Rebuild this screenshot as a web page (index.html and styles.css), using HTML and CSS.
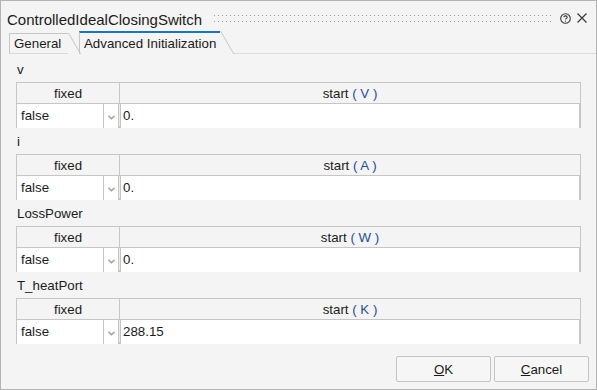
FILE: index.html
```html
<!DOCTYPE html>
<html>

<head>
    <meta charset="utf-8">
    <title>ControlledIdealClosingSwitch</title>

    <link rel="stylesheet" href="styles.css">
</head>

<body>

    <div class="dialog">
        <div class="titlebar">
            <span class="title">ControlledIdealClosingSwitch</span>
            <span class="grip"></span>
            <svg class="help_icon" width="11" height="11" viewBox="0 0 11 11">
                <circle cx="5.5" cy="5.5" r="4.8" fill="none" stroke="#3a3a3a" stroke-width="1.1"/>
                <path d="M3.8 4.3 Q3.9 2.9 5.5 2.9 Q7.2 2.9 7.2 4.2 Q7.2 5 6.2 5.4 Q5.5 5.7 5.5 6.6" fill="none" stroke="#3a3a3a" stroke-width="1.1"/>
                <circle cx="5.5" cy="8.1" r="0.7" fill="#3a3a3a"/>
            </svg>
            <svg class="close_icon" width="10" height="10" viewBox="0 0 10 10">
                <path d="M0.5 0.5 L9.5 9.5 M9.5 0.5 L0.5 9.5" stroke="#333" stroke-width="1.1"/>
            </svg>
        </div>

        <div class="tabs">
            <div class="tab tab_general">General</div>
            <div class="tab tab_active">Advanced Initialization</div>
            <div class="tab_fill"></div>
        </div>

        <div class="content">
            <div class="param">
                <div class="param_name">v</div>
                <div class="param_table">
                    <div class="head_row">
                        <div class="head">fixed</div>
                        <div class="head">start <span class="unit">( V )</span></div>
                    </div>
                    <div class="data_row">
                        <div class="combo">
                            <span class="combo_text">false</span>
                            <span class="combo_arrow"><svg width="7" height="5" viewBox="0 0 7 5"><path d="M0.5 0.8 L3.5 3.8 L6.5 0.8" fill="none" stroke="#9a9a9a" stroke-width="1.3"/></svg></span>
                        </div>
                        <div class="value">0.</div>
                    </div>
                </div>
            </div>

            <div class="param">
                <div class="param_name">i</div>
                <div class="param_table">
                    <div class="head_row">
                        <div class="head">fixed</div>
                        <div class="head">start <span class="unit">( A )</span></div>
                    </div>
                    <div class="data_row">
                        <div class="combo">
                            <span class="combo_text">false</span>
                            <span class="combo_arrow"><svg width="7" height="5" viewBox="0 0 7 5"><path d="M0.5 0.8 L3.5 3.8 L6.5 0.8" fill="none" stroke="#9a9a9a" stroke-width="1.3"/></svg></span>
                        </div>
                        <div class="value">0.</div>
                    </div>
                </div>
            </div>

            <div class="param">
                <div class="param_name">LossPower</div>
                <div class="param_table">
                    <div class="head_row">
                        <div class="head">fixed</div>
                        <div class="head">start <span class="unit">( W )</span></div>
                    </div>
                    <div class="data_row">
                        <div class="combo">
                            <span class="combo_text">false</span>
                            <span class="combo_arrow"><svg width="7" height="5" viewBox="0 0 7 5"><path d="M0.5 0.8 L3.5 3.8 L6.5 0.8" fill="none" stroke="#9a9a9a" stroke-width="1.3"/></svg></span>
                        </div>
                        <div class="value">0.</div>
                    </div>
                </div>
            </div>

            <div class="param">
                <div class="param_name">T_heatPort</div>
                <div class="param_table">
                    <div class="head_row">
                        <div class="head">fixed</div>
                        <div class="head">start <span class="unit">( K )</span></div>
                    </div>
                    <div class="data_row">
                        <div class="combo">
                            <span class="combo_text">false</span>
                            <span class="combo_arrow"><svg width="7" height="5" viewBox="0 0 7 5"><path d="M0.5 0.8 L3.5 3.8 L6.5 0.8" fill="none" stroke="#9a9a9a" stroke-width="1.3"/></svg></span>
                        </div>
                        <div class="value">288.15</div>
                    </div>
                </div>
            </div>
        </div>

        <div class="footer">
            <button class="dlg_button"><u>O</u>K</button>
            <button class="dlg_button"><u>C</u>ancel</button>
        </div>
    </div>

</body>

</html>
```

FILE: styles.css
```css
* {
    box-sizing: border-box;
}

body {
    margin: 0;
    background-color: #ffffff;
}

.dialog {
    width: 597px;
    height: 390px;
    border: 1px solid #b4b4b4;
    background-color: #f4f4f4;
    font-family: "Liberation Sans", Arial, sans-serif;
    font-size: 13.3px;
    color: #1b1b1b;
    display: flex;
    flex-direction: column;
}

/* title bar */
.titlebar {
    height: 30px;
    padding: 10px 9px 0 6px;
    display: flex;
    align-items: flex-start;
}

.title {
    font-size: 15px;
    line-height: 17px;
    white-space: nowrap;
}

.grip {
    flex: 1;
    height: 7px;
    margin: 4px 9px 0 12px;
    background-image: conic-gradient(from 270deg at 1px 1px, #9c9c9c 25%, transparent 0);
    background-size: 4px 6px;
}

.help_icon {
    margin-top: 2px;
}

.close_icon {
    margin: 2px 0 0 6px;
}

/* tabs */
.tabs {
    height: 23px;
    padding-left: 8px;
    display: flex;
    align-items: flex-end;
}

.tab {
    position: relative;
    height: 21px;
    padding-left: 4px;
    line-height: 19px;
    border-top: 1px solid #c6c6c6;
    border-left: 1px solid #c6c6c6;
    white-space: nowrap;
}

.tab::after {
    content: "";
    position: absolute;
    top: -1px;
    bottom: -1px;
    right: -1px;
    width: 1px;
    background-color: #c6c6c6;
    transform: skewX(30deg);
    transform-origin: top;
}

.tab_general {
    width: 59px;
    margin-right: 11px;
    border-bottom: 1px solid #d8d8d8;
}

.tab_active {
    width: 141px;
    height: 23px;
    line-height: 21px;
    border-top: 2px solid #1a78ae;
}

.tab_active::after {
    top: -2px;
    bottom: 0;
}

.tab_fill {
    flex: 1;
    height: 23px;
    margin-left: 13px;
    border-bottom: 1px solid #dcdcdc;
}

/* parameters */
.content {
    padding: 2px 15px 0 15px;
}

.param_name {
    height: 26px;
    padding: 2px 0 0 1px;
    line-height: 24px;
}

.param_table {
    height: 46px;
    border: 1px solid #c6c6c6;
    border-bottom-width: 2px;
    background-color: #ebebeb;
}

.head_row {
    display: grid;
    grid-template-columns: 103px 1fr;
    height: 21px;
    border-bottom: 1px solid #c6c6c6;
    background-color: #f4f4f4;
}

.head {
    text-align: center;
    line-height: 21px;
}

.head:first-child {
    border-right: 1px solid #c6c6c6;
}

.unit {
    color: #1f4f9a;
}

.data_row {
    display: grid;
    grid-template-columns: 102px 1fr;
    height: 22px;
}

.combo {
    display: flex;
    background-color: #ffffff;
    border-right: 1px solid #c6c6c6;
}

.combo_text {
    flex: 1;
    padding-left: 4px;
    line-height: 24px;
    border-right: 1px solid #c6c6c6;
}

.combo_arrow {
    width: 14px;
    padding-top: 2px;
    display: flex;
    align-items: center;
    justify-content: center;
}

.value {
    margin-left: 1px;
    padding-left: 2px;
    line-height: 24px;
    background-color: #ffffff;
    border-left: 1px solid #c6c6c6;
    border-right: 1px solid #c6c6c6;
}

/* buttons */
.footer {
    margin-top: auto;
    padding: 0 7px 7px 0;
    display: flex;
    justify-content: flex-end;
    gap: 3px;
}

.dlg_button {
    width: 95px;
    height: 26px;
    border: 1px solid #c4c4c4;
    border-radius: 2px;
    background-color: #f6f6f6;
    font-family: "Liberation Sans", Arial, sans-serif;
    font-size: 13.3px;
    color: #1b1b1b;
    padding: 0;
}
```
